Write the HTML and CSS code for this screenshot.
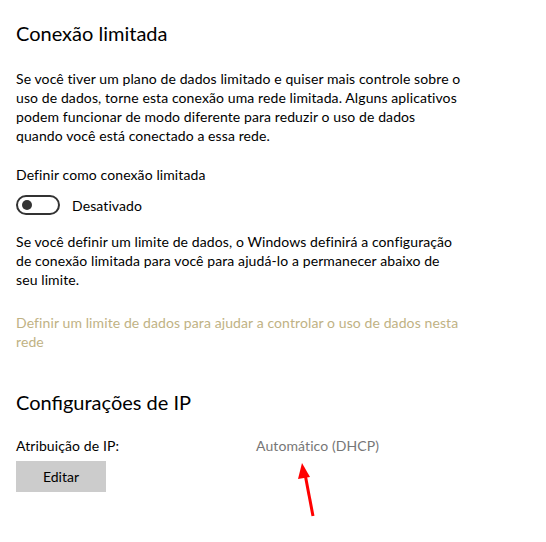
FILE: index.html
```
<!DOCTYPE html>
<html lang="pt">
<head>
<meta charset="utf-8">
<link rel="stylesheet" href="styles.css">
</head>
<body>
<main class="page">
  <h1 class="title">Conexão limitada</h1>
  <p class="text p1">Se você tiver um plano de dados limitado e quiser mais controle sobre o uso de dados, torne esta conexão uma rede limitada. Alguns aplicativos podem funcionar de modo diferente para reduzir o uso de dados quando você está conectado a essa rede.</p>
  <div class="text label">Definir como conexão limitada</div>
  <div class="toggle-row">
    <span class="toggle"><span class="knob"></span></span>
    <span class="text">Desativado</span>
  </div>
  <p class="text p2">Se você definir um limite de dados, o Windows definirá a configuração de conexão limitada para você para ajudá-lo a permanecer abaixo de seu limite.</p>
  <a class="text link">Definir um limite de dados para ajudar a controlar o uso de dados nesta rede</a>
  <h2 class="title t2">Configurações de IP</h2>
  <div class="text ip-row">
    <span class="ip-label">Atribuição de IP:</span>
    <span class="ip-value">Automático (DHCP)</span>
  </div>
  <button class="btn">Editar</button>
</main>
<svg class="arrow" width="30" height="60" viewBox="0 0 30 60">
  <line x1="23" y1="56" x2="15" y2="14" stroke="#ff0000" stroke-width="3"/>
  <polygon points="12,3 8,19 20,17" fill="#ff0000"/>
</svg>
</body>
</html>
```
FILE: styles.css
```
html, body {
  margin: 0;
  padding: 0;
  background: #ffffff;
}
body {
  font-family: "Segoe UI", Lato, "Noto Sans", sans-serif;
  color: #000000;
  position: relative;
  width: 546px;
  height: 542px;
  overflow: hidden;
}
.page {
  padding: 19px 0 0 16px;
  display: flex;
  flex-direction: column;
  align-items: flex-start;
}
.title {
  font-size: 20px;
  font-weight: 400;
  line-height: 28px;
  margin: 0;
}
.text {
  font-size: 14px;
  line-height: 19px;
  letter-spacing: 0.1px;
}
.p1 {
  margin: 22px 0 0 0;
  width: 446px;
}
.label {
  margin-top: 20px;
}
.toggle-row {
  margin-top: 11px;
  display: flex;
  align-items: center;
  gap: 12px;
  height: 20px;
}
.toggle {
  box-sizing: border-box;
  width: 44px;
  height: 20px;
  border: 2px solid #333333;
  border-radius: 10px;
  display: flex;
  align-items: center;
  padding-left: 4px;
}
.knob {
  width: 10px;
  height: 10px;
  border-radius: 50%;
  background: #333333;
}
.p2 {
  margin: 17px 0 0 0;
  width: 446px;
}
.link {
  margin-top: 24px;
  color: #bfb284;
  width: 460px;
}
.t2 {
  margin-top: 37px;
}
.ip-row {
  margin-top: 20px;
  display: flex;
}
.ip-label {
  width: 240px;
}
.ip-value {
  color: #767676;
}
.btn {
  margin-top: 6px;
  width: 90px;
  height: 31px;
  border: none;
  background: #cccccc;
  font-family: inherit;
  font-size: 14px;
  color: #000000;
  padding: 0;
}
.arrow {
  position: absolute;
  left: 290px;
  top: 460px;
}
```
